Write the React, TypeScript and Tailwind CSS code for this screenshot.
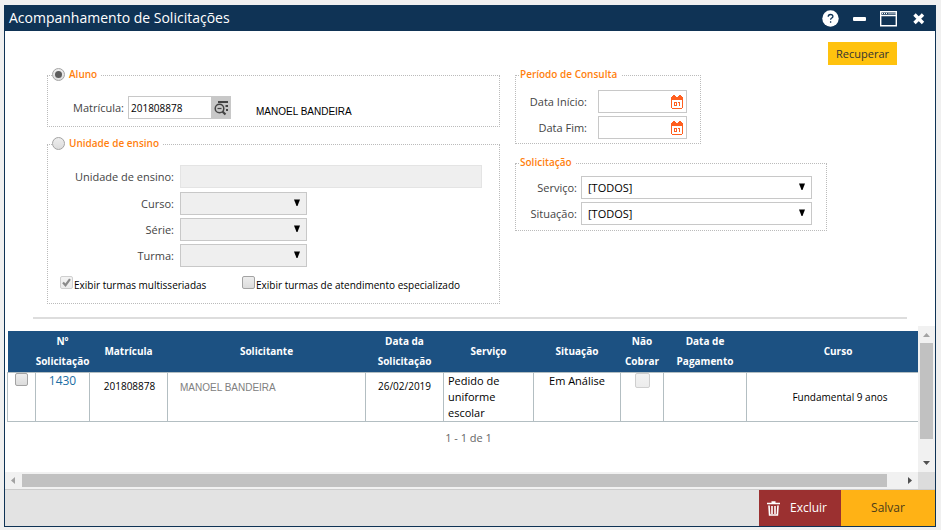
import type { ReactNode } from "react";

const labelText = "text-[11px] leading-4 text-[#444] text-right";

function Panel({ legend, className, children }: { legend: ReactNode; className: string; children: ReactNode }) {
  return (
    <fieldset className={`border border-dotted border-[#bbb] ${className}`}>
      <legend className="ml-1 flex h-[17px] items-center gap-1 pr-1 pb-[3px] text-[10px] leading-[14px] font-semibold text-[#ff7f0e]">
        {legend}
      </legend>
      {children}
    </fieldset>
  );
}

function Caret() {
  return (
    <svg className="pointer-events-none absolute top-[7px] right-1.5" width="8" height="8" viewBox="0 0 8 8" aria-hidden="true">
      <path d="M1 0.5h6L4.5 7h-1z" fill="#000" />
    </svg>
  );
}

function SelectBox({ id, value, disabled, className }: { id: string; value?: string; disabled?: boolean; className: string }) {
  return (
    <div className={`relative ${className}`}>
      <select
        id={id}
        disabled={disabled}
        className="block h-[23px] w-full appearance-none border border-[#c8c8c8] bg-white pl-1.5 text-[11px] leading-4 text-black disabled:bg-[#efefef]"
      >
        <option>{value ?? ""}</option>
      </select>
      <Caret />
    </div>
  );
}

function CheckBox({
  id,
  checked,
  disabled,
  label,
  size = "size-[13px]",
}: {
  id?: string;
  checked?: boolean;
  disabled?: boolean;
  label?: string;
  size?: string;
}) {
  return (
    <span className={`relative inline-block shrink-0 ${size}`}>
      <input
        id={id}
        type="checkbox"
        aria-label={label}
        defaultChecked={checked}
        disabled={disabled}
        className={`peer block appearance-none rounded-[2px] border border-[#a3a3a3] bg-linear-to-b from-[#ededed] to-[#dcdcdc] disabled:border-[#cfcfcf] disabled:from-[#f3f3f3] disabled:to-[#ececec] ${size}`}
      />
      <svg className="pointer-events-none absolute inset-0 hidden peer-checked:block" width="13" height="13" viewBox="0 0 13 13" aria-hidden="true">
        <path d="M3 6.5l2.5 2.7L10 3.2" fill="none" stroke="#8a8a8a" strokeWidth="2.2" />
      </svg>
    </span>
  );
}

function Radio({ id, checked }: { id: string; checked?: boolean }) {
  return (
    <input
      id={id}
      type="radio"
      name="filtro"
      defaultChecked={checked}
      className="grid size-[13px] appearance-none place-items-center rounded-full border border-[#a3a3a3] bg-linear-to-b from-[#eee] to-[#dcdcdc] checked:before:size-[7px] checked:before:rounded-full checked:before:bg-[#5c5c5c] checked:before:content-['']"
    />
  );
}

function SearchListIcon() {
  return (
    <svg width="16" height="16" viewBox="0 0 16 16" fill="none" stroke="#444" aria-hidden="true">
      <path d="M5 2h10M12.500 6h2.500M13 10h2" strokeWidth="2" />
      <circle cx="6.500" cy="8.500" r="4.300" strokeWidth="1.500" />
      <path d="M4.500 8.500h4" strokeWidth="1.200" />
      <path d="M9.500 11.500l3 3" strokeWidth="2.200" />
    </svg>
  );
}

function CalendarIcon() {
  return (
    <svg width="12" height="14" viewBox="0 0 12 14" fill="#ff5f1f" shapeRendering="crispEdges" aria-hidden="true">
      <path d="M2 0h2v1h1v1h2V1h1V0h2v1h1v1h1v11h-1v1H1v-1H0V2h1V1h1zM1 5v8h10V5z" fillRule="evenodd" />
      <path d="M3 7h3v4H3zM4 8v2h1V8zM7 7h2v4H8V8H7z" fillRule="evenodd" />
    </svg>
  );
}

function DateField({ id, label }: { id: string; label: string }) {
  return (
    <div className="flex items-center gap-[11px]">
      <label htmlFor={id} className={`w-[71px] ${labelText}`}>
        {label}
      </label>
      <div className="flex h-[23px] w-[89px] items-center border border-[#c8c8c8] pr-[3px]">
        <input id={id} type="text" className="w-0 flex-1 px-1 text-[11px] outline-none" />
        <button type="button" aria-label="Abrir calendário">
          <CalendarIcon />
        </button>
      </div>
    </div>
  );
}

const columns = [
  { title: "", width: "w-[28px]" },
  { title: "Nº Solicitação", width: "w-[54px]" },
  { title: "Matrícula", width: "w-[78px]" },
  { title: "Solicitante", width: "w-[198px]" },
  { title: "Data da Solicitação", width: "w-[78px]" },
  { title: "Serviço", width: "w-[90px]" },
  { title: "Situação", width: "w-[87px]" },
  { title: "Não Cobrar", width: "w-[43px]" },
  { title: "Data de Pagamento", width: "w-[83px]" },
  { title: "Curso", width: "w-auto" },
];

export default function App() {
  return (
    <div className="flex min-h-screen flex-col bg-[#f0f0f0] pt-[5px] pr-[5px] pb-[3px] pl-1 font-['Open_Sans','Noto_Sans',sans-serif] text-black">
      <main className="flex flex-1 flex-col border border-t-0 border-[#0f3355] bg-white">
        <header className="flex h-[26px] items-center justify-between bg-[#0f3355] pr-2 pl-1 text-white">
          <h1 className="text-[14px] leading-5">Acompanhamento de Solicitações</h1>
          <div className="flex items-center gap-[13px]">
            <button type="button" aria-label="Ajuda">
              <svg width="17" height="17" viewBox="0 0 17 17" fill="none">
                <circle cx="8.5" cy="8.5" r="8.2" fill="#fff" />
                <path d="M6.200 6.800C6.200 5.300 7 4.500 8.500 4.500S10.900 5.200 10.900 6.400c0 1.700-2.300 1.700-2.300 3.400M8.600 11.300v1.500" stroke="#0f3355" strokeWidth="1.300" />
              </svg>
            </button>
            <button type="button" aria-label="Minimizar">
              <svg width="15" height="17" viewBox="0 0 15 17">
                <rect x="1" y="7" width="13" height="4" rx="1" fill="#fff" />
              </svg>
            </button>
            <button type="button" aria-label="Maximizar">
              <svg width="17" height="17" viewBox="0 0 17 17" fill="none" stroke="#fff">
                <path d="M0.7 1.7h15.6v14H0.7zM1 5.5h15" strokeWidth="1.4" />
                <path d="M2 3.500h5" strokeWidth="1.200" strokeDasharray="1 1" />
                <path d="M8 3.500h8" strokeWidth="1.200" opacity="0.500" />
              </svg>
            </button>
            <button type="button" aria-label="Fechar">
              <svg width="17" height="17" viewBox="0 0 17 17">
                <path d="M4.5 4.5l8.500 8.500M13 4.500l-8.500 8.500" stroke="#fff" strokeWidth="3.400" />
              </svg>
            </button>
          </div>
        </header>

        <form className="flex flex-1 flex-col" onSubmit={(e) => e.preventDefault()}>
          <div className="flex justify-end pt-[11px] pr-[38px]">
            <button type="button" className="h-[23px] bg-[#ffc20e] px-2 text-[11px] leading-4 text-[#333]">
              Recuperar
            </button>
          </div>

          <div className="mt-0.5 flex gap-[15px] pl-[42px]">
            <div className="flex w-[453px] flex-col gap-[9px]">
              <Panel
                className="pb-[7px]"
                legend={
                  <>
                    <Radio id="r-aluno" checked />
                    <label htmlFor="r-aluno">Aluno</label>
                  </>
                }
              >
                <div className="mt-3 flex h-[23px] items-center">
                  <label htmlFor="matricula" className={`mr-1 w-[76px] ${labelText}`}>
                    Matrícula:
                  </label>
                  <input
                    id="matricula"
                    type="text"
                    defaultValue="201808878"
                    className="h-[23px] w-[83px] border border-r-0 border-[#c8c8c8] px-0.5 text-[10px] leading-4 outline-none"
                  />
                  <button type="button" aria-label="Pesquisar matrícula" className="grid h-[23px] w-5 place-items-center bg-[#c8c8c8]">
                    <SearchListIcon />
                  </button>
                  <span className="mt-2 ml-[25px] font-['Liberation_Sans',sans-serif] text-[10px] leading-4">MANOEL BANDEIRA</span>
                </div>
              </Panel>

              <Panel
                className="pb-[10px]"
                legend={
                  <>
                    <Radio id="r-unidade" />
                    <label htmlFor="r-unidade">Unidade de ensino</label>
                  </>
                }
              >
                <div className="mt-3 flex flex-col gap-[3px]">
                  <div className="mb-px flex items-center gap-1.5">
                    <label htmlFor="unidade" className={`w-[126px] ${labelText}`}>
                      Unidade de ensino:
                    </label>
                    <input id="unidade" type="text" disabled className="h-[23px] w-[302px] border border-[#e4e4e4] bg-[#efefef] px-1 text-[11px]" />
                  </div>
                  {["Curso", "Série", "Turma"].map((name) => (
                    <div key={name} className="flex items-center gap-1.5">
                      <label htmlFor={name} className={`w-[126px] ${labelText}`}>
                        {name}:
                      </label>
                      <SelectBox id={name} disabled className="w-[127px]" />
                    </div>
                  ))}
                </div>
                <div className="mt-[9px] flex pl-3">
                  <div className="flex w-[182px] items-start gap-px">
                    <CheckBox id="multi" checked disabled />
                    <label htmlFor="multi" className="pt-px text-[10px] leading-4 whitespace-nowrap">
                      Exibir turmas multisseriadas
                    </label>
                  </div>
                  <div className="flex items-start gap-px">
                    <CheckBox id="especial" />
                    <label htmlFor="especial" className="pt-px text-[10px] leading-4 whitespace-nowrap">
                      Exibir turmas de atendimento especializado
                    </label>
                  </div>
                </div>
              </Panel>
            </div>

            <div className="flex w-[312px] flex-col items-start gap-[11px]">
              <Panel className="w-[186px] pb-1" legend="Período de Consulta">
                <div className="mt-1.5 flex flex-col gap-[3px]">
                  <DateField id="inicio" label="Data Início:" />
                  <DateField id="fim" label="Data Fim:" />
                </div>
              </Panel>
              <Panel className="w-full pb-[5px]" legend="Solicitação">
                <div className="mt-1 flex flex-col gap-[3px]">
                  {["Serviço", "Situação"].map((name) => (
                    <div key={name} className="flex items-center gap-1">
                      <label htmlFor={name} className={`w-[61px] ${labelText}`}>
                        {name}:
                      </label>
                      <SelectBox id={name} value="[TODOS]" className="w-[231px]" />
                    </div>
                  ))}
                </div>
              </Panel>
            </div>
          </div>

          <hr className="mt-[13px] mr-7 mb-[7px] ml-7 h-0.5 border-0 bg-[#ddd]" />

          <div className="grid flex-1 grid-cols-[minmax(0,1fr)_17px] grid-rows-[minmax(0,1fr)_17px]">
            <div className="overflow-hidden pt-[5px] pl-0.5">
              <div className="min-w-[923px]">
                <table className="w-full table-fixed border-collapse">
                  <thead>
                    <tr className="h-[41px] bg-[#1c5182] text-[10px] leading-5 font-semibold text-white">
                      {columns.map((c) => (
                        <th key={c.title} className={c.width}>
                          {c.title}
                        </th>
                      ))}
                    </tr>
                  </thead>
                  <tbody>
                    <tr className="h-[49px] text-[11px] leading-4 [&>td]:border [&>td]:border-[#b3bec2] [&>td]:align-top">
                      <td className="text-center">
                        <CheckBox label="Selecionar solicitação 1430" />
                      </td>
                      <td className="text-center">
                        <a href="#1430" className="text-[12px] text-[#1c6ea4]">
                          1430
                        </a>
                      </td>
                      <td className="pt-[5px] pl-0.5 text-center text-[10px]">201808878</td>
                      <td className="pt-[7px] pl-3 font-['Liberation_Sans',sans-serif] text-[10px] text-[#808080]">MANOEL BANDEIRA</td>
                      <td className="pt-[5px] text-center text-[10px]">26/02/2019</td>
                      <td className="pr-6 pl-1">Pedido de uniforme escolar</td>
                      <td className="text-center">Em Análise</td>
                      <td className="text-center">
                        <CheckBox label="Não cobrar" disabled size="size-[15px]" />
                      </td>
                      <td />
                      <td className="pt-4 pl-1 text-center text-[10px]">Fundamental 9 anos</td>
                    </tr>
                  </tbody>
                </table>
                <p className="mt-2 text-center text-[11px] leading-4 text-[#666]">1 - 1 de 1</p>
              </div>
            </div>
            <div className="flex flex-col items-center justify-between bg-[#f1f1f1]">
              <svg width="17" height="17" viewBox="0 0 17 17" aria-hidden="true">
                <path d="M5 11l3.500-4 3.500 4z" fill="#a3a3a3" />
              </svg>
              <div className="mb-auto h-24 w-[13px] bg-[#c1c1c1]" />
              <svg width="17" height="17" viewBox="0 0 17 17" aria-hidden="true">
                <path d="M5 6l3.500 4 3.500-4z" fill="#505050" />
              </svg>
            </div>
            <div className="flex items-center bg-[#f1f1f1]">
              <svg width="17" height="17" viewBox="0 0 17 17" aria-hidden="true">
                <path d="M10 5L6 8.500 10 12z" fill="#a3a3a3" />
              </svg>
              <div className="mr-[14px] h-[13px] flex-1 bg-[#c1c1c1]" />
              <svg width="17" height="17" viewBox="0 0 17 17" aria-hidden="true">
                <path d="M7 5l4 3.500L7 12z" fill="#505050" />
              </svg>
            </div>
            <div className="bg-[#dcdcdc]" />
          </div>

          <footer className="flex h-[37px] justify-end border-t border-[#ccc] bg-[#e3e3e3] text-[12px] leading-5">
            <button type="button" className="flex w-[82px] items-center gap-[10px] bg-[#9b3030] pl-2 font-medium text-white">
              <svg width="13" height="15" viewBox="0 0 13 15" fill="none" stroke="#fff" aria-hidden="true">
                <path d="M0 2.500h13M4.500 1h4" strokeWidth="1.600" />
                <path d="M2 4.500l.6 9.500h7.800L11 4.500M5 5v8M8 5v8" strokeWidth="1.600" />
              </svg>
              Excluir
            </button>
            <button type="button" className="w-[94px] bg-[#ffb215] text-[#4d3c18]">
              Salvar
            </button>
          </footer>
        </form>
      </main>
    </div>
  );
}
